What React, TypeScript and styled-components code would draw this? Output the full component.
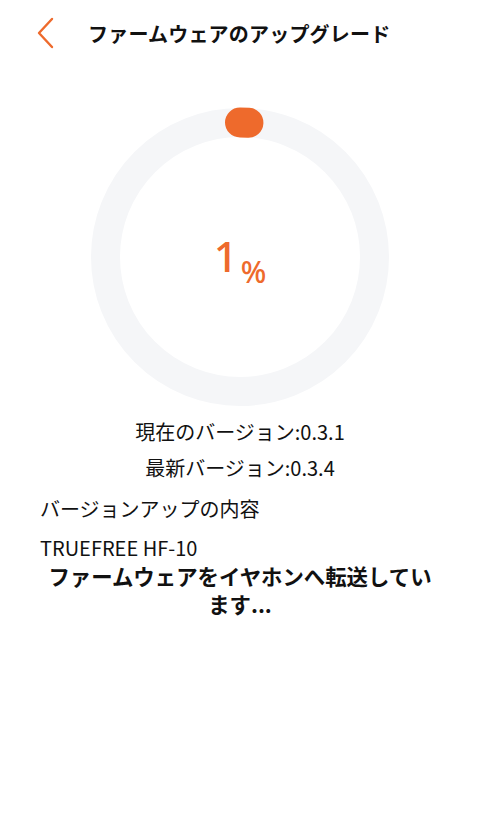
import React from "react";
import styled, { createGlobalStyle } from "styled-components";

const Global = createGlobalStyle`
  html, body { margin: 0; padding: 0; background: #ffffff; }
  body { font-family: "Noto Sans CJK JP", "Noto Sans", sans-serif; color: #111; }
`;

const Page = styled.div`
  width: 480px;
  height: 833px;
  display: flex;
  flex-direction: column;
  background: #fff;
`;

const Header = styled.header`
  height: 66px;
  display: flex;
  align-items: center;
  padding-left: 36px;
  gap: 33px;
`;

const BackButton = styled.button`
  border: 0;
  background: none;
  padding: 0;
  width: 19px;
  height: 32px;
  display: flex;
  align-items: center;
  justify-content: center;
  cursor: pointer;
`;

const Title = styled.h1`
  margin: 0;
  font-size: 20px;
  font-weight: 700;
  letter-spacing: 0.2px;
  color: #111;
`;

const RingWrap = styled.div`
  margin: 41px auto 0;
  width: 300px;
  height: 300px;
  position: relative;
`;

const Percent = styled.div`
  position: absolute;
  left: 0;
  right: 0;
  top: 128px;
  display: flex;
  justify-content: center;
  align-items: baseline;
  color: #ee6a2c;
  font-family: "Noto Sans", sans-serif;
  font-weight: 500;
`;

const Big = styled.span`
  font-size: 42px;
  line-height: 1;
`;

const Small = styled.span`
  font-size: 30px;
  line-height: 1;
  position: relative;
  top: 11px;
  margin-left: 3px;
`;

const Info = styled.div`
  margin-top: 7px;
  padding: 0 40px;
  display: flex;
  flex-direction: column;
`;

const CenterLine = styled.p`
  margin: 0;
  font-size: 20px;
  line-height: 36px;
  text-align: center;
`;

const LeftLine = styled.p<{ $top: number }>`
  margin: ${(p) => p.$top}px 0 0;
  font-size: 20px;
  line-height: 28px;
  text-align: left;
`;

const Status = styled.p`
  margin: 0;
  font-size: 21.4px;
  font-weight: 700;
  line-height: 28px;
  text-align: center;
`;

const R = 134.5;
const C = 2 * Math.PI * R;

export default function App() {
  const progress = 0.01;
  return (
    <Page>
      <Global />
      <Header>
        <BackButton aria-label="back">
          <svg width="19" height="32" viewBox="0 0 19 32">
            <path d="M16 2 L3 16 L16 30" fill="none" stroke="#ee6a2c" strokeWidth="2.4" strokeLinecap="round" strokeLinejoin="round" />
          </svg>
        </BackButton>
        <Title>ファームウェアのアップグレード</Title>
      </Header>
      <RingWrap>
        <svg width="300" height="300" viewBox="0 0 300 300">
          <circle cx="150" cy="150" r={R} fill="none" stroke="#f5f6f8" strokeWidth="29" />
          <circle
            cx="150"
            cy="150"
            r={R}
            fill="none"
            stroke="#ee6a2c"
            strokeWidth="30"
            strokeLinecap="round"
            strokeDasharray={`${C * progress} ${C}`}
            transform="rotate(-90 150 150)"
          />
        </svg>
        <Percent>
          <Big>1</Big>
          <Small>%</Small>
        </Percent>
      </RingWrap>
      <Info>
        <CenterLine>現在のバージョン:0.3.1</CenterLine>
        <CenterLine>最新バージョン:0.3.4</CenterLine>
        <LeftLine $top={9}>バージョンアップの内容</LeftLine>
        <LeftLine $top={11}>TRUEFREE HF-10</LeftLine>
        <Status>ファームウェアをイヤホンへ転送しています...</Status>
      </Info>
    </Page>
  );
}
